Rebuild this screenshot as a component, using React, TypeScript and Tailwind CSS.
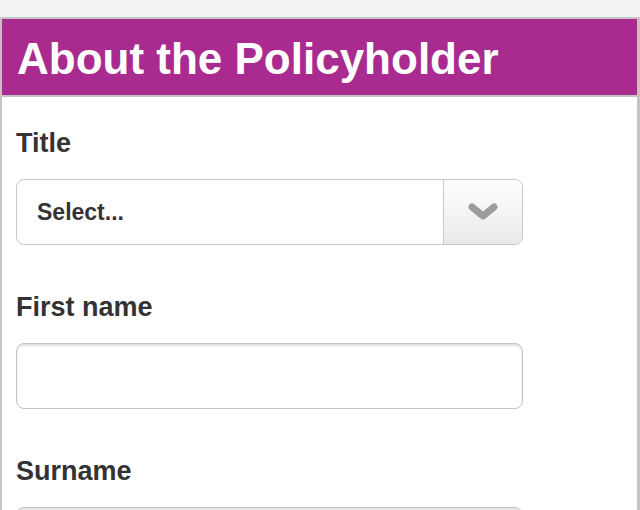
const Field = ({
  label,
  children,
}: {
  label: string;
  children: React.ReactNode;
}) => (
  <div className="mb-[47px]">
    <label className="block text-[27px] leading-[30px] font-bold text-[#333333] mb-[21px]">
      {label}
    </label>
    {children}
  </div>
);

const TextInput = () => (
  <input
    type="text"
    className="block w-[507px] h-[66px] rounded-[8px] border border-[#c4c4c4] bg-white shadow-[inset_0_2px_2px_rgba(0,0,0,0.12)] outline-none px-5 text-[22px]"
  />
);

const SelectBox = () => (
  <div className="flex w-[507px] h-[66px] rounded-[8px] border border-[#c8c8c8] bg-white overflow-hidden">
    <div className="flex-1 flex items-center pl-5 text-[23px] font-bold text-[#333333]">
      Select...
    </div>
    <div className="w-[79px] flex items-center justify-center border-l border-[#c8c8c8] bg-gradient-to-b from-white to-[#e9e9e9]">
      <svg width="30" height="20" viewBox="0 0 30 20">
        <path
          d="M4 5 L15 14 L26 5"
          fill="none"
          stroke="#9c9c9c"
          strokeWidth="7"
          strokeLinecap="round"
          strokeLinejoin="round"
        />
      </svg>
    </div>
  </div>
);

export default function App() {
  return (
    <div
      className="min-h-[510px] bg-[#f3f3f3] pt-[17px]"
      style={{ fontFamily: '"Liberation Sans", Arial, sans-serif' }}
    >
      <div className="w-[640px] border-2 border-r-[3px] border-b-0 border-[#c4c4c4] bg-white">
        <div className="h-[78px] bg-[#aa2b8f] border-b-2 border-[#c4c4c4] flex items-center pl-[15px]">
          <h1 className="text-[44px] leading-none font-bold text-white pt-[4px]">
            About the Policyholder
          </h1>
        </div>
        <div className="pl-[14px] pt-[31px]">
          <Field label="Title">
            <SelectBox />
          </Field>
          <Field label="First name">
            <TextInput />
          </Field>
          <Field label="Surname">
            <TextInput />
          </Field>
        </div>
      </div>
    </div>
  );
}
